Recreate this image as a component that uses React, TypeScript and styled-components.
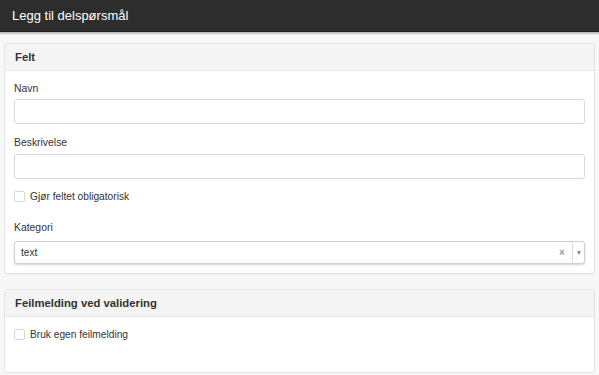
import React from "react";
import styled, { createGlobalStyle } from "styled-components";

const Global = createGlobalStyle`
  html, body { margin: 0; padding: 0; background: #f7f7f7; }
  body { font-family: "Liberation Sans", Arial, Helvetica, sans-serif; color: #333; }
  * { box-sizing: border-box; }
`;

const TopBar = styled.header`
  height: 32px;
  background: #2d2d2d;
  display: flex;
  align-items: center;
  padding: 0 12px;
  color: #fff;
  font-size: 13px;
  border-bottom: 1px solid #1e1e1e;
  box-shadow: 0 1px 0 #bdbdbd, 0 2px 0 #cfcfcf, 0 3px 0 #e6e6e6;
`;

const Main = styled.main`
  padding: 11px 4px 0;
  display: flex;
  flex-direction: column;
  gap: 15px;
`;

const Panel = styled.section`
  background: #fff;
  border: 1px solid #e4e4e4;
  border-radius: 3px;
  box-shadow: 0 1px 1px rgba(0, 0, 0, 0.03);
`;

const PanelHeader = styled.div`
  height: 27px;
  background: #f4f4f4;
  border-bottom: 1px solid #e4e4e4;
  border-radius: 3px 3px 0 0;
  display: flex;
  align-items: center;
  padding: 0 10px;
  font-size: 11.3px;
  font-weight: bold;
  color: #333;
`;

const PanelBody = styled.div<{ $pb?: number; $pt?: number }>`
  padding: ${(p) => p.$pt ?? 11}px 9px ${(p) => p.$pb ?? 9}px;
  display: flex;
  flex-direction: column;
`;

const Label = styled.label<{ $mt?: number; $mb?: number }>`
  display: block;
  font-size: 10.4px;
  line-height: 14px;
  height: 14px;
  margin-top: ${(p) => p.$mt ?? 0}px;
  margin-bottom: ${(p) => p.$mb ?? 3}px;
  color: #333;
`;

const Input = styled.input`
  display: block;
  width: 100%;
  height: 25px;
  border: 1px solid #d9d9d9;
  border-radius: 3px;
  background: #fff;
  font-family: inherit;
  font-size: 10px;
  padding: 0 6px;
  outline: none;
`;

const CheckRow = styled.label<{ $mt?: number }>`
  display: flex;
  align-items: center;
  gap: 5px;
  height: 14px;
  margin-top: ${(p) => p.$mt ?? 0}px;
  font-size: 10.2px;
  color: #333;
`;

const Box = styled.span`
  width: 11px;
  height: 11px;
  border: 1px solid #d6d6d6;
  border-radius: 2px;
  background: #fff;
  flex: none;
`;

const Select = styled.div`
  height: 23px;
  border: 1px solid #cfcfcf;
  border-radius: 3px;
  background: #fff;
  box-shadow: 0 1px 2px rgba(0, 0, 0, 0.18);
  display: flex;
  align-items: stretch;
  font-size: 10.2px;
`;

const SelectValue = styled.div`
  flex: 1;
  display: flex;
  align-items: center;
  padding-left: 6px;
  color: #333;
`;

const Clear = styled.div`
  width: 14px;
  display: flex;
  align-items: center;
  justify-content: center;
  color: #999;
  font-size: 10px;
  font-weight: bold;
  margin-right: 3px;
`;

const ArrowZone = styled.div`
  width: 12px;
  border-left: 1px solid #ddd;
  display: flex;
  align-items: center;
  justify-content: center;
`;

const Arrow = styled.span`
  width: 0;
  height: 0;
  border-left: 2.5px solid transparent;
  border-right: 2.5px solid transparent;
  border-top: 4px solid #888;
`;

export default function App() {
  return (
    <>
      <Global />
      <TopBar>Legg til delspørsmål</TopBar>
      <Main>
        <Panel>
          <PanelHeader>Felt</PanelHeader>
          <PanelBody>
            <Label>Navn</Label>
            <Input />
            <Label $mt={12} $mb={4}>Beskrivelse</Label>
            <Input />
            <CheckRow $mt={10}>
              <Box />
              Gjør feltet obligatorisk
            </CheckRow>
            <Label $mt={18} $mb={6}>Kategori</Label>
            <Select>
              <SelectValue>text</SelectValue>
              <Clear>×</Clear>
              <ArrowZone>
                <Arrow />
              </ArrowZone>
            </Select>
          </PanelBody>
        </Panel>
        <Panel>
          <PanelHeader>Feilmelding ved validering</PanelHeader>
          <PanelBody $pt={10} $pb={31}>
            <CheckRow>
              <Box />
              Bruk egen feilmelding
            </CheckRow>
          </PanelBody>
        </Panel>
      </Main>
    </>
  );
}
